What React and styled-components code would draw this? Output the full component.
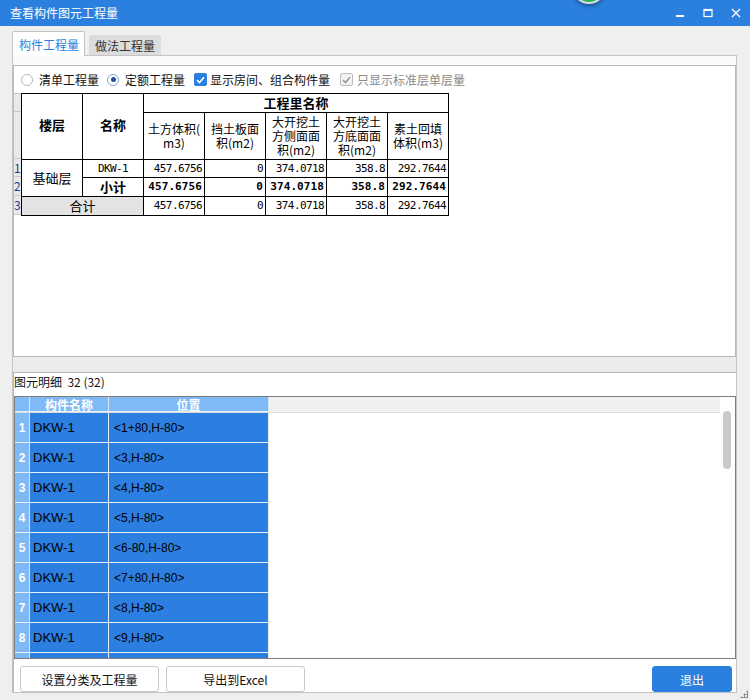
import styled, { createGlobalStyle } from 'styled-components';

const GlobalStyle = createGlobalStyle`
  html, body { margin: 0; padding: 0; background: #efefef; overflow: hidden; }
  body {
    font-family: "Noto Sans CJK SC", "Liberation Sans", sans-serif;
    font-size: 12px;
    color: #000;
  }
  * { box-sizing: border-box; }
`;

const CJK = '"Noto Sans CJK SC", "Liberation Sans", sans-serif';
const MONO = '"DejaVu Sans Mono", "Noto Sans CJK SC", monospace';

const Window = styled.div`
  position: relative;
  width: 750px;
  height: 700px;
  display: flex;
  flex-direction: column;
  overflow: hidden;
  background: #efefef;
`;

const TitleBar = styled.div`
  position: relative;
  height: 26px;
  flex-shrink: 0;
  display: flex;
  align-items: center;
  padding-left: 10px;
  background: #2b7fde;
  color: #fff;
  font-size: 12px;
`;

const TitleText = styled.div`
  flex: 1;
  line-height: 26px;
`;

const Controls = styled.div`
  display: flex;
  height: 26px;
`;

const CtrlButton = styled.div`
  width: 28px;
  height: 26px;
  display: flex;
  align-items: center;
  justify-content: center;
`;

const FloatBall = styled.div`
  position: absolute;
  left: 572px;
  top: -30px;
  width: 34px;
  height: 34px;
  border-radius: 50%;
  background: #2fb455;
  border: 2px solid #d9dde2;
  box-shadow: 0 2px 4px rgba(0, 0, 0, 0.35);
`;

const Body = styled.div`
  flex: 1;
  min-height: 0;
  display: flex;
  flex-direction: column;
  padding: 5px 13px 7px 12px;
`;

const TabBar = styled.div`
  height: 24px;
  flex-shrink: 0;
  display: flex;
  align-items: flex-end;
  gap: 4px;
  position: relative;
  z-index: 1;
`;

const Tab = styled.div`
  height: ${p => (p.$active ? '25px' : '20px')};
  width: ${p => (p.$active ? '73px' : '72px')};
  margin-bottom: ${p => (p.$active ? '-1px' : '0')};
  padding-left: 6px;
  display: flex;
  align-items: center;
  font-size: 12px;
  color: ${p => (p.$active ? '#2b7fde' : '#333')};
  background: ${p => (p.$active ? '#fff' : '#dcdcdc')};
  border: ${p => (p.$active ? '1px solid #c4c4c4' : 'none')};
  border-bottom: none;
  border-radius: 2px 2px 0 0;
`;

const Pane = styled.div`
  flex: 1;
  min-height: 0;
  overflow: hidden;
  display: flex;
  flex-direction: column;
  padding-top: 9px;
  background: #fafafa;
  border: 1px solid #c4c4c4;
`;

const UpperPanel = styled.div`
  height: 292px;
  flex-shrink: 0;
  background: #fff;
  border: 1px solid #b9b9b9;
`;

const OptionRow = styled.div`
  height: 27px;
  display: flex;
  align-items: center;
  padding-left: 7px;
`;

const Option = styled.label`
  display: flex;
  align-items: center;
  gap: ${p => p.$gap || 6}px;
  margin-right: ${p => p.$mr || 0}px;
  color: ${p => (p.$disabled ? '#8a8a8a' : '#111')};
  font-size: 12px;
  white-space: nowrap;
`;

const Radio = styled.span`
  width: 12px;
  height: 12px;
  border-radius: 50%;
  border: 1px solid ${p => (p.$checked ? '#7ea6d6' : '#b8b8b8')};
  background: #fff;
  display: flex;
  align-items: center;
  justify-content: center;
  &::after {
    content: '';
    display: ${p => (p.$checked ? 'block' : 'none')};
    width: 5px;
    height: 5px;
    border-radius: 50%;
    background: #1f4d98;
  }
`;

const Check = styled.span`
  width: 13px;
  height: 13px;
  border-radius: 2px;
  display: flex;
  align-items: center;
  justify-content: center;
  background: ${p => (p.$disabled ? '#f3f3f3' : '#2b7fde')};
  border: 1px solid ${p => (p.$disabled ? '#bdbdbd' : '#2b7fde')};
`;

const TableArea = styled.div`
  display: flex;
  align-items: flex-start;
`;

const Strip = styled.div`
  width: 7px;
  display: flex;
  flex-direction: column;
  background: #e9e9e9;
  border-top: 1px solid #c8c8c8;
`;

const StripCell = styled.div`
  height: ${p => p.$h}px;
  border-bottom: 1px solid #c8c8c8;
  overflow: hidden;
  font-size: 12px;
  line-height: ${p => p.$h - 1}px;
  color: #1f3c8c;
`;

const QtyTable = styled.table`
  border-collapse: collapse;
  table-layout: fixed;
  width: 427px;
  font-family: ${CJK};
`;

const Row = styled.tr`
  height: ${p => p.$h}px;
`;

const Cell = styled.td`
  border: 1px solid #000;
  padding: 0 ${p => p.$pad ?? 2}px 0 ${p => p.$pad ?? 2}px;
  text-align: ${p => p.$align || 'center'};
  vertical-align: middle;
  font-size: ${p => p.$size || 12}px;
  font-weight: ${p => (p.$bold ? 700 : 400)};
  background: ${p => p.$bg || '#fff'};
  line-height: 14px;
  white-space: nowrap;
  overflow: hidden;
`;

const NumCell = styled(Cell)`
  font-family: ${MONO};
  font-size: 11px;
  letter-spacing: ${p => (p.$bold ? '0.1px' : '-0.6px')};
  text-align: ${p => p.$align || 'right'};
`;

const Splitter = styled.div`
  height: 15px;
  flex-shrink: 0;
  background: #ececec;
`;

const LowerPanel = styled.div`
  flex: 1;
  min-height: 0;
  display: flex;
  flex-direction: column;
  background: #fff;
  border-top: 1px solid #b9b9b9;
  border-left: 1px solid #b9b9b9;
`;

const DetailLabel = styled.div`
  height: 23px;
  flex-shrink: 0;
  line-height: 17px;
  font-size: 12px;
  color: #111;
  white-space: pre;
`;

const Grid = styled.div`
  flex: 1;
  min-height: 0;
  display: flex;
  border: 1px solid #7d7d7d;
  overflow: hidden;
`;

const GridMain = styled.div`
  flex: 1;
  min-width: 0;
  display: flex;
  flex-direction: column;
  overflow: hidden;
`;

const GridRow = styled.div`
  display: flex;
  flex-shrink: 0;
  height: ${p => (p.$head ? 16 : 30)}px;
  background: ${p => (p.$head ? '#f0f0f0' : '#fff')};
  border-bottom: ${p => (p.$head ? '1px solid #dcdcdc' : 'none')};
`;

const GridCell = styled.div`
  width: ${p => p.$w}px;
  flex-shrink: 0;
  display: flex;
  align-items: center;
  justify-content: ${p => (p.$center ? 'center' : 'flex-start')};
  padding-left: ${p => p.$pl || 0}px;
  background: ${p => (p.$light ? '#7fbaf6' : '#2c7fe0')};
  color: ${p => (p.$light ? '#fff' : '#000')};
  font-weight: ${p => (p.$light ? 700 : 400)};
  font-size: ${p => p.$size || 12}px;
  font-family: ${p => (p.$latin ? '"Liberation Sans", sans-serif' : CJK)};
  border-right: 1px solid ${p => (p.$light ? '#d6e6f8' : '#e6f0fb')};
  border-bottom: 1px solid #e6f0fb;
  white-space: nowrap;
`;

const ScrollTrack = styled.div`
  width: 15px;
  flex-shrink: 0;
  padding: 14px 3px 0 3px;
`;

const Thumb = styled.div`
  width: 8px;
  height: 58px;
  border-radius: 4px;
  background: #c9c9c9;
`;

const Footer = styled.div`
  height: 33px;
  flex-shrink: 0;
  display: flex;
  align-items: flex-start;
  padding: 7px 4px 0 6px;
  gap: 7px;
`;

const Button = styled.button`
  height: 26px;
  width: ${p => p.$w}px;
  border-radius: 3px;
  border: 1px solid ${p => (p.$primary ? '#2b7fde' : '#c9c9c9')};
  background: ${p => (p.$primary ? '#2b7fde' : '#fff')};
  color: ${p => (p.$primary ? '#fff' : '#111')};
  font-family: ${CJK};
  font-size: 12px;
  padding: 0;
  margin-left: ${p => (p.$push ? 'auto' : '0')};
`;

const Grip = styled.div`
  position: absolute;
  right: 2px;
  bottom: 2px;
  width: 8px;
  height: 8px;
  background-image: radial-gradient(circle, #8c8c8c 1px, transparent 1.2px);
  background-size: 3px 3px;
  clip-path: polygon(100% 0, 100% 100%, 0 100%);
`;

const CheckMark = ({ color }) => (
  <svg width="9" height="8" viewBox="0 0 9 8">
    <path d="M1 4.2 L3.5 6.5 L8 1.2" fill="none" stroke={color} strokeWidth="1.6" />
  </svg>
);

const rows = [
  { n: 1, name: 'DKW-1', pos: '<1+80,H-80>' },
  { n: 2, name: 'DKW-1', pos: '<3,H-80>' },
  { n: 3, name: 'DKW-1', pos: '<4,H-80>' },
  { n: 4, name: 'DKW-1', pos: '<5,H-80>' },
  { n: 5, name: 'DKW-1', pos: '<6-80,H-80>' },
  { n: 6, name: 'DKW-1', pos: '<7+80,H-80>' },
  { n: 7, name: 'DKW-1', pos: '<8,H-80>' },
  { n: 8, name: 'DKW-1', pos: '<9,H-80>' },
  { n: '', name: '', pos: '' },
];

const App = () => {
  return (
    <Window>
      <GlobalStyle />
      <TitleBar>
        <FloatBall />
        <TitleText>查看构件图元工程量</TitleText>
        <Controls>
          <CtrlButton>
            <svg width="10" height="10" viewBox="0 0 10 10">
              <rect x="1" y="7" width="8" height="2" fill="#fff" />
            </svg>
          </CtrlButton>
          <CtrlButton>
            <svg width="10" height="10" viewBox="0 0 10 10">
              <rect x="1" y="1.5" width="8" height="7" fill="none" stroke="#fff" strokeWidth="1.2" />
              <rect x="1" y="1" width="8" height="2" fill="#fff" />
            </svg>
          </CtrlButton>
          <CtrlButton>
            <svg width="10" height="10" viewBox="0 0 10 10">
              <path d="M1 1 L9 9 M9 1 L1 9" stroke="#fff" strokeWidth="1.4" />
            </svg>
          </CtrlButton>
        </Controls>
      </TitleBar>

      <Body>
        <TabBar>
          <Tab $active>构件工程量</Tab>
          <Tab>做法工程量</Tab>
        </TabBar>
        <Pane>
          <UpperPanel>
            <OptionRow>
              <Option $mr={8}>
                <Radio />
                清单工程量
              </Option>
              <Option $mr={9}>
                <Radio $checked />
                定额工程量
              </Option>
              <Option $gap={3} $mr={10}>
                <Check>
                  <CheckMark color="#fff" />
                </Check>
                显示房间、组合构件量
              </Option>
              <Option $gap={4} $disabled>
                <Check $disabled>
                  <CheckMark color="#9a9a9a" />
                </Check>
                只显示标准层单层量
              </Option>
            </OptionRow>
            <TableArea>
              <Strip>
                <StripCell $h={18} />
                <StripCell $h={47} />
                <StripCell $h={18}>1</StripCell>
                <StripCell $h={19}>2</StripCell>
                <StripCell $h={19}>3</StripCell>
              </Strip>
              <QtyTable>
                <colgroup>
                  {Array.from({ length: 7 }).map((_, i) => (
                    <col key={i} style={{ width: 61 }} />
                  ))}
                </colgroup>
                <tbody>
                  <Row $h={19}>
                    <Cell rowSpan={2} $bold $size={13}>
                      <div style={{ marginTop: -4 }}>楼层</div>
                    </Cell>
                    <Cell rowSpan={2} $bold $size={13}>
                      <div style={{ marginTop: -4 }}>名称</div>
                    </Cell>
                    <Cell colSpan={5} $bold $size={13}>工程里名称</Cell>
                  </Row>
                  <Row $h={47}>
                    <Cell $pad={0}>土方体积(<br />m3)</Cell>
                    <Cell $pad={0}>挡土板面<br />积(m2)</Cell>
                    <Cell $pad={0}>大开挖土<br />方侧面面<br />积(m2)</Cell>
                    <Cell $pad={0}>大开挖土<br />方底面面<br />积(m2)</Cell>
                    <Cell $pad={0}>素土回填<br />体积(m3)</Cell>
                  </Row>
                  <Row $h={18}>
                    <Cell rowSpan={2} $size={13}>基础层</Cell>
                    <NumCell $align="center">DKW-1</NumCell>
                    <NumCell>457.6756</NumCell>
                    <NumCell>0</NumCell>
                    <NumCell>374.0718</NumCell>
                    <NumCell>358.8</NumCell>
                    <NumCell>292.7644</NumCell>
                  </Row>
                  <Row $h={19}>
                    <Cell $bold $size={13}>小计</Cell>
                    <NumCell $bold>457.6756</NumCell>
                    <NumCell $bold>0</NumCell>
                    <NumCell $bold>374.0718</NumCell>
                    <NumCell $bold>358.8</NumCell>
                    <NumCell $bold>292.7644</NumCell>
                  </Row>
                  <Row $h={19}>
                    <Cell colSpan={2} $bg="#e3e3e3" $size={13}>合计</Cell>
                    <NumCell>457.6756</NumCell>
                    <NumCell>0</NumCell>
                    <NumCell>374.0718</NumCell>
                    <NumCell>358.8</NumCell>
                    <NumCell>292.7644</NumCell>
                  </Row>
                </tbody>
              </QtyTable>
            </TableArea>
          </UpperPanel>

          <Splitter />

          <LowerPanel>
            <DetailLabel>图元明细  32 (32)</DetailLabel>
            <Grid>
              <GridMain>
                <GridRow $head>
                  <GridCell $w={15} $light />
                  <GridCell $w={79} $light $center>构件名称</GridCell>
                  <GridCell $w={160} $light $center>位置</GridCell>
                </GridRow>
                {rows.map((r, i) => (
                  <GridRow key={i}>
                    <GridCell $w={15} $light $center $latin>{r.n}</GridCell>
                    <GridCell $w={79} $pl={3} $size={13} $latin>{r.name}</GridCell>
                    <GridCell $w={160} $pl={5} $latin>{r.pos}</GridCell>
                  </GridRow>
                ))}
              </GridMain>
              <ScrollTrack>
                <Thumb />
              </ScrollTrack>
            </Grid>
            <Footer>
              <Button $w={139}>设置分类及工程量</Button>
              <Button $w={139}>导出到Excel</Button>
              <Button $w={80} $primary $push>退出</Button>
            </Footer>
          </LowerPanel>
        </Pane>
      </Body>
      <Grip />
    </Window>
  );
};

export default App;
